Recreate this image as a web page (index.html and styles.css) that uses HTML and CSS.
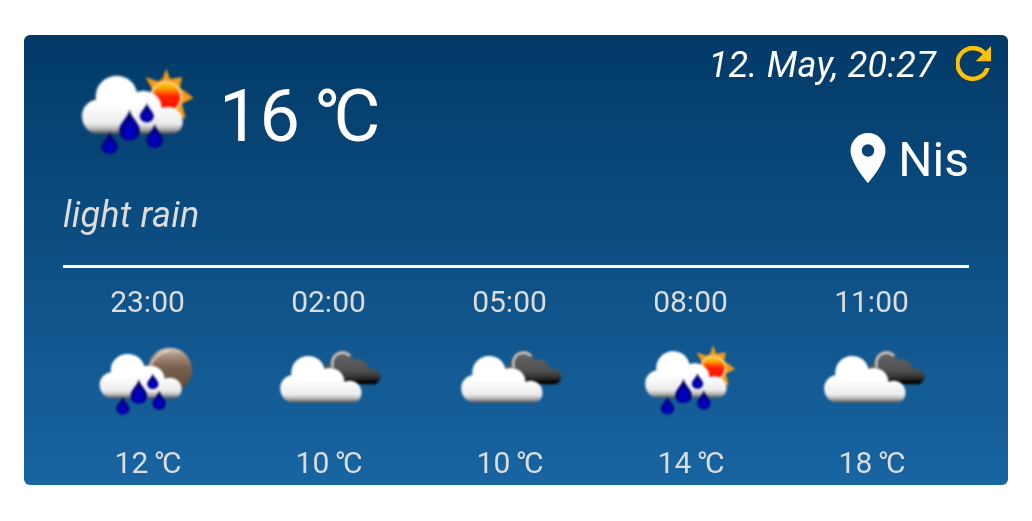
FILE: index.html
```html
<!DOCTYPE html>
<html lang="en">
<head>
<meta charset="utf-8">
<title>Weather</title>
<link rel="stylesheet" href="styles.css">
</head>
<body>
<svg class="defs" width="0" height="0" aria-hidden="true">
  <defs>
    <linearGradient id="white" gradientUnits="userSpaceOnUse" x1="0" y1="50" x2="0" y2="190">
      <stop offset="0" stop-color="#fff"/><stop offset=".5" stop-color="#fff"/><stop offset=".82" stop-color="#ececec"/><stop offset=".91" stop-color="#b4b4b4"/><stop offset="1" stop-color="#484848"/>
    </linearGradient>
    <linearGradient id="dark" x1="0" y1="0" x2="0" y2="1" color-interpolation="sRGB">
      <stop offset="0" stop-color="#686868"/><stop offset=".6" stop-color="#505050"/><stop offset=".8" stop-color="#303030"/><stop offset=".95" stop-color="#000"/>
    </linearGradient>
    <linearGradient id="sunfill" x1="0" y1="0" x2="0" y2="1">
      <stop offset="0" stop-color="#ffd000"/><stop offset=".2" stop-color="#ffa800"/><stop offset=".45" stop-color="#ff2800"/><stop offset="1" stop-color="#f00"/>
    </linearGradient>
    <linearGradient id="moonfill" x1="0" y1="0" x2="0" y2="1">
      <stop offset="0" stop-color="#d9c9bf"/><stop offset=".2" stop-color="#a58a78"/><stop offset=".45" stop-color="#78604f"/><stop offset="1" stop-color="#5c4637"/>
    </linearGradient>
    <radialGradient id="water" cx=".5" cy=".7" r=".6">
      <stop offset="0" stop-color="#0000d8"/><stop offset=".45" stop-color="#0000a8"/><stop offset="1" stop-color="#00004c"/>
    </radialGradient>
    <filter id="soft" x="-10%" y="-10%" width="120%" height="120%" color-interpolation-filters="sRGB"><feGaussianBlur stdDeviation="2.6"/></filter>
    <path id="cloud" fill="url(#white)" d="M67 189C45 189 29 168 29 146C29 126 43 110 63 106C59 73 84 49 113 49C138 49 157 65 162 88C188 78 221 94 222 127C247 116 273 133 273 159C273 176 262 189 245 189Z"/>
    <path id="drop" fill="url(#water)" d="M0 -38C3 -18 25 -5 25 13C25 28 13 37 0 37C-13 37 -25 28 -25 13C-25 -5 -3 -18 0 -38Z"/>
    <g id="rain">
      <use href="#drop" transform="translate(144 168)"/>
      <use href="#drop" transform="translate(186 138) scale(.67 .63)"/>
      <use href="#drop" transform="translate(96 211) scale(.79 .72)"/>
      <use href="#drop" transform="translate(205 194) scale(.79 .79)"/>
    </g>
    <g id="sun">
      <path fill="#f59a18" d="M233 31L242 56L271 52L266 77L299 102L271 116L280 152L250 140L210 140L194 112L198 79L183 52L213 62L224 56Z"/>
      <circle cx="233" cy="100" r="36" fill="url(#sunfill)" stroke="#ffd9a0" stroke-width="5"/>
    </g>
    <g id="sunrain"><use href="#sun"/><use href="#cloud"/><use href="#rain"/></g>
    <g id="moonrain">
      <circle cx="238" cy="105" r="67" fill="url(#moonfill)"/>
      <path d="M180 90Q198 54 237 47" fill="none" stroke="#f2e8e2" stroke-width="7" opacity=".6"/>
      <use href="#cloud" transform="translate(-2 10) scale(1.01 .955)"/>
      <use href="#rain" transform="translate(1 1)"/>
    </g>
    <g id="clouds">
      <path fill="url(#dark)" d="M180 147L163 95C174 90 178 84 180 74C187 50 212 42 229 49C240 54 247 64 249 75C270 67 291 80 294 101C314 97 329 110 329 126C329 139 319 148 307 148Z"/>
      <path d="M187 98C181 71 194 55 216 53C226 53 232 56 238 63" fill="none" stroke="#e4e4e4" stroke-width="7" opacity=".85"/>
      <use href="#cloud" transform="translate(0 14)"/>
    </g>
  </defs>
</svg>
<main class="card">
  <section class="current">
    <div class="now">
      <div class="reading">
        <svg class="icon-large" viewBox="0 0 420 300"><g filter="url(#soft)"><use href="#sunrain" transform="translate(-.2 -13) scale(1.24)"/></g></svg>
        <span class="temp">16 <span class="unit">°C</span></span>
      </div>
      <div class="condition">light rain</div>
    </div>
    <div class="meta">
      <div class="updated"><span>12. May, 20:27</span>
        <svg class="refresh" viewBox="4 4 16 16"><path fill="#ffc107" d="M17.65 6.35A7.96 7.96 0 0 0 12 4a8 8 0 1 0 7.4 10h-2.08A6 6 0 1 1 12 6c1.66 0 3.14.69 4.22 1.78L13 11h7V4z"/></svg>
      </div>
      <div class="place">
        <svg class="pin" viewBox="5 2 14 20"><path fill="#fff" d="M12 2a7 7 0 0 0-7 7c0 5.25 7 13 7 13s7-7.75 7-13a7 7 0 0 0-7-7zm0 9.5a2.5 2.5 0 1 1 0-5 2.5 2.5 0 0 1 0 5z"/></svg>
        <span>Nis</span>
      </div>
    </div>
  </section>
  <section class="forecast">
    <div class="slot"><span>23:00</span><svg class="icon" viewBox="-7.5 0 360 270"><g filter="url(#soft)"><use href="#moonrain"/></g></svg><span class="degrees">12 <span class="unit">°C</span></span></div>
    <div class="slot"><span>02:00</span><svg class="icon" viewBox="-4.5 0 360 270"><g filter="url(#soft)"><use href="#clouds"/></g></svg><span class="degrees">10 <span class="unit">°C</span></span></div>
    <div class="slot"><span>05:00</span><svg class="icon" viewBox="-4.5 0 360 270"><g filter="url(#soft)"><use href="#clouds"/></g></svg><span class="degrees">10 <span class="unit">°C</span></span></div>
    <div class="slot"><span>08:00</span><svg class="icon" viewBox="-13.5 0 360 270"><g filter="url(#soft)"><use href="#sunrain"/></g></svg><span class="degrees">14 <span class="unit">°C</span></span></div>
    <div class="slot"><span>11:00</span><svg class="icon" viewBox="-7.5 0 360 270"><g filter="url(#soft)"><use href="#clouds"/></g></svg><span class="degrees">18 <span class="unit">°C</span></span></div>
  </section>
</main>
</body>
</html>
```
FILE: styles.css
```css
* { box-sizing: border-box; }
body { margin: 0; padding: 35px 24px 36px; background: #fff; font-family: Roboto, sans-serif; color: #fff; }
.defs { position: absolute; }
svg { display: block; flex: none; }
.card { height: 450px; padding: 0 39px; border-radius: 6px; overflow: hidden; background: linear-gradient(#023a67, #1865a2); }
.current { display: flex; justify-content: space-between; height: 233px; border-bottom: 3px solid #fff; }
.now { padding-top: 25px; }
.reading { display: flex; margin-left: 7px; }
.icon-large { width: 140px; height: 100px; }
.temp { margin-left: 9px; padding-top: 15px; font-size: 72px; line-height: 84px; word-spacing: -4px; white-space: nowrap; }
.unit { letter-spacing: -0.1em; }
.condition { margin-top: 34px; font-size: 36px; line-height: 42px; font-style: italic; letter-spacing: 0.25px; color: #dcdcdc; }
.meta { display: flex; flex-direction: column; align-items: flex-end; }
.updated { display: flex; margin: 9px -22px 0 0; font-size: 36px; line-height: 42px; font-style: italic; letter-spacing: 0.25px; white-space: nowrap; }
.refresh { width: 35px; height: 35px; margin: 2px 0 0 20px; }
.place { display: flex; margin-top: 46px; font-size: 48px; line-height: 56px; }
.pin { width: 36px; height: 50px; margin: 1px 12px 0 0; }
.forecast { display: grid; grid-template-columns: repeat(5, 181px); }
.slot { display: flex; flex-direction: column; align-items: center; padding: 16px 12px 0 0; font-size: 30px; line-height: 35px; color: #dcdcdc; }
.icon { width: 120px; height: 90px; margin: 16px 0 20px; }
.degrees { margin-right: 2px; word-spacing: -2px; white-space: nowrap; }
```
